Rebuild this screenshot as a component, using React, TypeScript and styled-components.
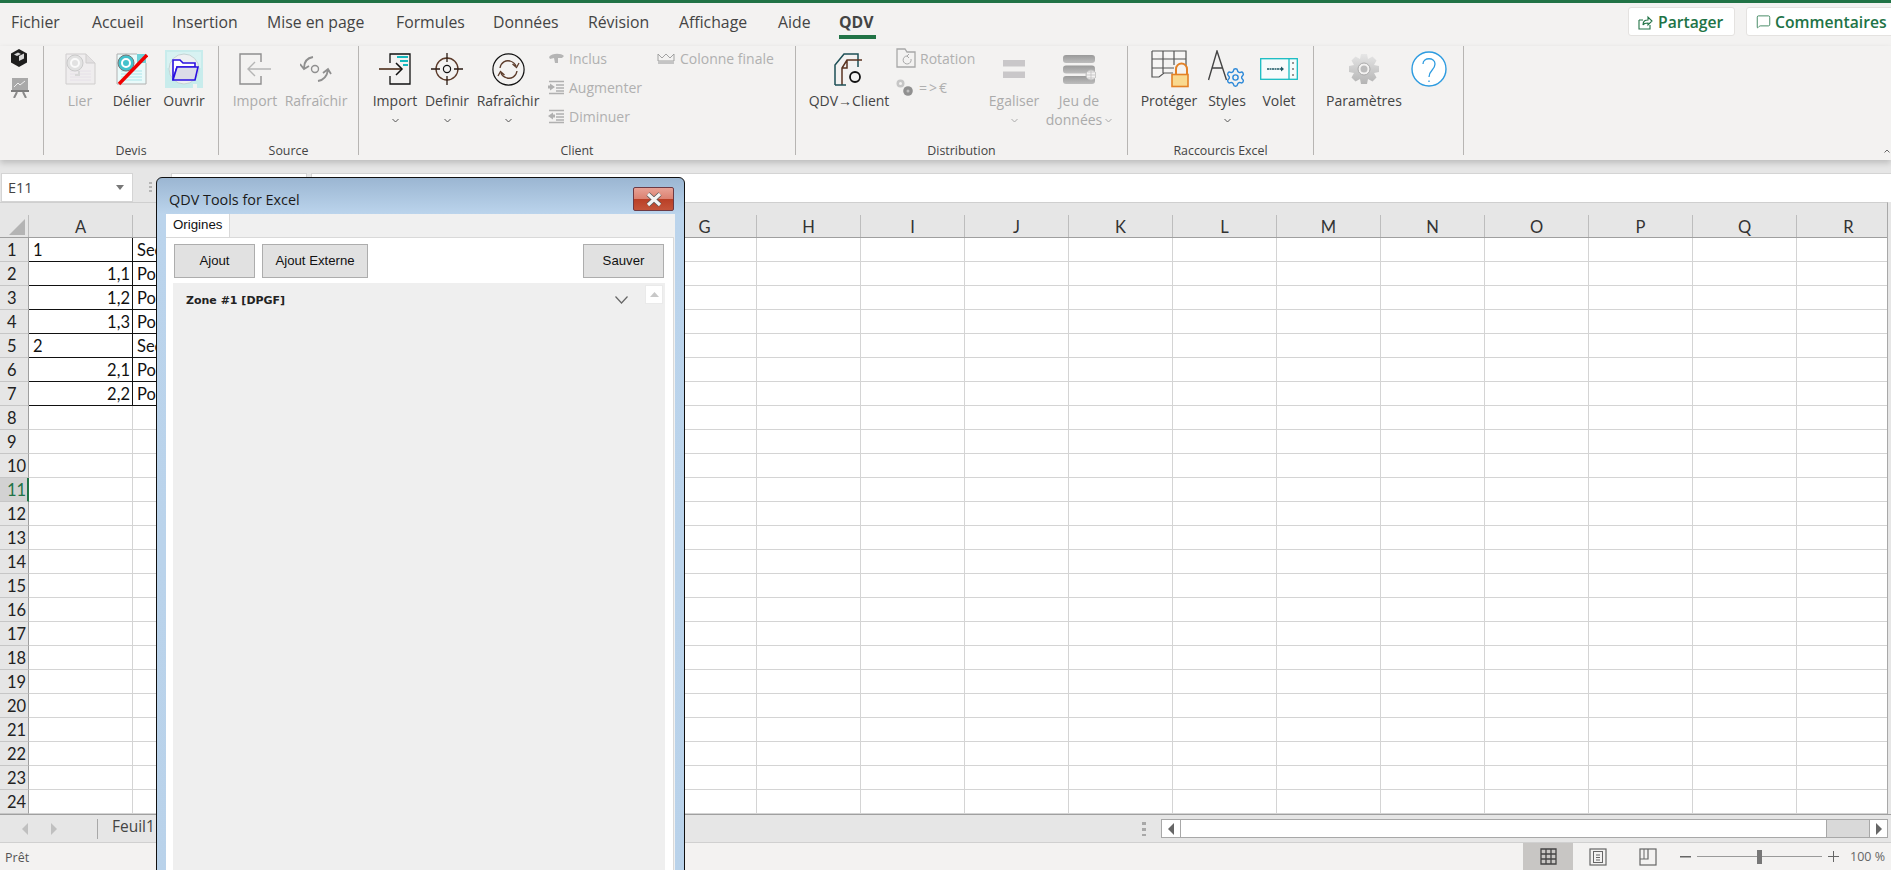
import React from "react";
import styled, { createGlobalStyle } from "styled-components";
import { Settings, MessageSquare } from "lucide-react";

const Global = createGlobalStyle`
  html, body { margin: 0; padding: 0; background: #fff; }
  #root { width: 1891px; height: 870px; }
  * { box-sizing: border-box; }
`;

const UI = `"Open Sans", "Noto Sans", sans-serif`;
const CELL = `Lato, "Liberation Sans", sans-serif`;
const WIN = `"Liberation Sans", Arial, sans-serif`;

const Page = styled.div`
  position: relative;
  width: 1891px;
  height: 870px;
  overflow: hidden;
  display: flex;
  flex-direction: column;
  background: #e6e6e6;
  font-family: ${UI};
`;
const TopLine = styled.div`height: 3px; background: #217346; flex: none;`;
const TabRow = styled.div`
  height: 43px;
  flex: none;
  background: #f3f2f1;
  display: flex;
  padding-left: 11px;
  align-items: flex-start;
`;
const Tab = styled.div<{ $w: number; $active?: boolean }>`
  width: ${(p) => p.$w}px;
  height: 36px;
  padding-top: 8px;
  font-size: 15.8px;
  line-height: 22px;
  color: #444;
  white-space: nowrap;
  font-weight: ${(p) => (p.$active ? 700 : 400)};
`;
const TabLabel = styled.div`
  width: 37px;
  height: 28px;
  border-bottom: 4px solid #217346;
`;
const ShareWrap = styled.div`
  margin-left: auto;
  margin-right: -5px;
  display: flex;
  gap: 11px;
  padding-top: 4px;
`;
const ShareBtn = styled.div<{ $w: number; $gap: number }>`
  width: ${(p) => p.$w}px;
  height: 29px;
  background: #fff;
  border: 1px solid #e4e2e0;
  border-radius: 3px;
  display: flex;
  align-items: center;
  gap: ${(p) => p.$gap}px;
  padding-left: 9px;
  font-size: 15.7px;
  font-weight: 600;
  color: #217346;
  white-space: nowrap;
`;
const Ribbon = styled.div`
  position: relative;
  height: 114px;
  flex: none;
  background: #f3f2f1;
  display: flex;
  box-shadow: 0 3px 6px rgba(0, 0, 0, 0.18);
  z-index: 1;
`;
const Group = styled.div<{ $w: number }>`
  width: ${(p) => p.$w}px;
  height: 109px;
  flex: none;
  display: flex;
  flex-direction: column;
  border-right: 1px solid #b7b5b3;
`;
const GroupBody = styled.div<{ $pad?: number }>`
  height: 97px;
  flex: none;
  display: flex;
  padding-left: ${(p) => p.$pad ?? 0}px;
`;
const GroupLabel = styled.div`
  height: 12px;
  line-height: 16px;
  text-align: center;
  font-size: 12.4px;
  color: #444;
  white-space: nowrap;
`;
const Big = styled.div<{ $w: number; $off?: boolean }>`
  width: ${(p) => p.$w}px;
  flex: none;
  display: flex;
  flex-direction: column;
  align-items: center;
  color: ${(p) => (p.$off ? "#ababab" : "#444")};
  font-size: 14px;
  white-space: nowrap;
`;
const IconSlot = styled.div`
  height: 42px;
  margin-top: 2px;
  display: flex;
  align-items: center;
  justify-content: center;
  flex: none;
`;
const BigText = styled.div`
  height: 20px;
  margin-top: 1px;
  line-height: 20px;
`;
const BigSub = styled.div`
  height: 18px;
  line-height: 18px;
  display: flex;
  align-items: center;
  gap: 3px;
`;
const SmallCol = styled.div<{ $w: number; $ml?: number }>`
  width: ${(p) => p.$w}px;
  margin-left: ${(p) => p.$ml ?? 0}px;
  display: flex;
  flex-direction: column;
  gap: 5px;
  flex: none;
`;
const SmallRow = styled.div<{ $slot: number }>`
  height: 24px;
  display: flex;
  align-items: center;
  font-size: 14px;
  color: #b0b0b0;
  white-space: nowrap;
  & > svg { flex: none; margin-right: ${(p) => p.$slot}px; }
`;
const EuroText = styled.span`
  letter-spacing: 2px;
`;
const TinyCol = styled.div`
  padding: 3px 0 0 11px;
  display: flex;
  flex-direction: column;
  gap: 11px;
`;
const Collapse = styled.svg`
  position: absolute;
  right: 1px;
  bottom: 7px;
`;
const FormulaBar = styled.div`
  height: 42px;
  flex: none;
  padding-top: 13px;
  display: flex;
  background: #e6e6e6;
`;
const NameBox = styled.div`
  width: 132px;
  height: 29px;
  margin-left: 1px;
  background: #fff;
  border: 1px solid #d4d4d4;
  display: flex;
  align-items: center;
  justify-content: space-between;
  padding: 0 8px 0 6px;
  font-size: 14.5px;
  color: #444;
`;
const Dots = styled.div`
  width: 3px;
  height: 11px;
  margin: 9px 19px 0 16px;
  flex: none;
  background: repeating-linear-gradient(#b4b4b4 0 2px, transparent 2px 4px);
`;
const FxBox = styled.div`
  width: 136px;
  height: 29px;
  margin-right: 4px;
  flex: none;
  background: #fff;
  border: 1px solid #d4d4d4;
`;
const FormulaInput = styled.div`
  flex: 1;
  height: 29px;
  background: #fff;
  border-top: 1px solid #d4d4d4;
  border-left: 1px solid #d4d4d4;
`;
const Sheet = styled.div`
  height: 612px;
  flex: none;
  width: 1888px;
  overflow: hidden;
  border-right: 1px solid #a8a8a8;
  background: #fff;
  border-top: 1px solid #cfcfcf;
  position: relative;
`;
const Canvas = styled.div`
  width: 1891px;
  background: #fff;
`;
const HeaderRow = styled.div`
  height: 35px;
  padding-top: 12px;
  display: flex;
  background: #e6e6e6;
  border-bottom: 1px solid #9f9f9f;
`;
const Corner = styled.div`
  width: 29px;
  flex: none;
  border-right: 1px solid #bdbdbd;
  display: flex;
  align-items: flex-end;
  justify-content: flex-end;
  padding: 0 3px 2px 0;
`;
const ColHead = styled.div`
  width: 104px;
  flex: none;
  border-right: 1px solid #bdbdbd;
  text-align: center;
  font-family: ${CELL};
  font-size: 16.5px;
  line-height: 24px;
  color: #333;
`;
const Row = styled.div`
  height: 24px;
  display: flex;
`;
const RowHead = styled.div<{ $sel?: boolean }>`
  width: 29px;
  flex: none;
  overflow: hidden;
  background: ${(p) => (p.$sel ? "#d2d2d2" : "#e6e6e6")};
  color: ${(p) => (p.$sel ? "#217346" : "#222")};
  border-right: ${(p) => (p.$sel ? "2px solid #217346" : "1px solid #9f9f9f")};
  border-bottom: 1px solid #c6c6c6;
  font-family: ${CELL};
  font-size: 16.5px;
  line-height: 25px;
  padding-left: 7px;
`;
const Cell = styled.div<{ $box?: boolean; $boxR?: boolean; $right?: boolean }>`
  width: 104px;
  flex: none;
  overflow: hidden;
  white-space: nowrap;
  font-family: ${CELL};
  font-size: 16.5px;
  line-height: 25px;
  color: #111;
  padding: 0 2px 0 4px;
  text-align: ${(p) => (p.$right ? "right" : "left")};
  border-right: 1px solid ${(p) => (p.$boxR ? "#111" : "#d4d4d4")};
  border-bottom: 1px solid ${(p) => (p.$box ? "#111" : "#d4d4d4")};
`;
const SheetTabs = styled.div`
  height: 29px;
  flex: none;
  display: flex;
  align-items: center;
  background: #e6e6e6;
  border-top: 1px solid #a0a0a0;
  border-bottom: 1px solid #d0d0d0;
`;
const NavArrows = styled.div`
  width: 98px;
  height: 20px;
  border-right: 1px solid #a8a8a8;
  padding-left: 22px;
  display: flex;
  align-items: center;
  gap: 23px;
  flex: none;
`;
const SheetName = styled.div`
  margin: -6px 0 0 14px;
  font-size: 15.5px;
  color: #444;
  white-space: nowrap;
  width: 90px;
`;
const Grip = styled.div`
  margin-left: 940px;
  width: 4px;
  height: 14px;
  background: repeating-linear-gradient(#a8a8a8 0 3px, transparent 3px 6px);
  flex: none;
`;
const HScroll = styled.div`
  margin-left: 15px;
  width: 727px;
  height: 19px;
  background: #d9d9d9;
  border: 1px solid #a8a8a8;
  display: flex;
  flex: none;
`;
const ScrollEnd = styled.div<{ $w: number }>`
  width: ${(p) => p.$w}px;
  flex: none;
  background: #fff;
  display: flex;
  align-items: center;
  justify-content: center;
  border-left: 1px solid #a8a8a8;
  &:first-child { border-left: none; border-right: 1px solid #a8a8a8; }
`;
const Thumb = styled.div`
  width: 646px;
  flex: none;
  background: #fff;
  border-right: 1px solid #a8a8a8;
`;
const Track = styled.div`flex: 1;`;
const StatusBar = styled.div`
  height: 27px;
  flex: none;
  display: flex;
  align-items: stretch;
  background: #f3f2f1;
  font-size: 12.5px;
  color: #555;
`;
const Ready = styled.div`
  width: 1523px;
  padding-left: 5px;
  line-height: 29px;
  flex: none;
`;
const ViewBtn = styled.div<{ $active?: boolean }>`
  width: 50px;
  display: flex;
  align-items: center;
  justify-content: center;
  background: ${(p) => (p.$active ? "#c8c6c4" : "transparent")};
  flex: none;
`;
const Zoom = styled.div`
  display: flex;
  align-items: center;
  padding-left: 7px;
  gap: 6px;
  flex: none;
`;
const ZoomSign = styled.div`
  width: 11px;
  height: 11px;
  flex: none;
  background: linear-gradient(#666, #666) center / 11px 1.5px no-repeat;
`;
const ZoomPlus = styled(ZoomSign)`
  background: linear-gradient(#666, #666) center / 11px 1px no-repeat,
    linear-gradient(#666, #666) center / 1px 11px no-repeat;
`;
const Slider = styled.div`
  width: 125px;
  height: 1px;
  background: #9a9a9a;
  display: flex;
  justify-content: center;
  align-items: center;
  flex: none;
`;
const SliderThumb = styled.div`
  width: 5px;
  height: 14px;
  background: #777;
  flex: none;
`;
const ZoomText = styled.div`
  margin-left: 5px;
  white-space: nowrap;
  color: #666;
`;
const Dialog = styled.div`
  position: absolute;
  left: 156px;
  top: 177px;
  width: 529px;
  height: 720px;
  z-index: 5;
  border: 1px solid #111;
  border-radius: 6px 6px 0 0;
  background: linear-gradient(#9bb6d2 0, #bbd4ec 36px, #b9d2ea 100%);
  display: flex;
  flex-direction: column;
`;
const TitleBar = styled.div`
  height: 36px;
  flex: none;
  display: flex;
  align-items: flex-start;
  justify-content: space-between;
  padding: 9px 10px 0 12px;
  font-size: 14.4px;
  color: #1a1a1a;
  line-height: 25px;
`;
const CloseBtn = styled.div`
  width: 41px;
  height: 24px;
  border: 1px solid #6d3a44;
  border-radius: 2px;
  background: linear-gradient(#e8a296 0, #dc8272 48%, #b93f26 50%, #c4543a 100%);
  display: flex;
  align-items: center;
  justify-content: center;
`;
const DialogClient = styled.div`
  flex: 1;
  margin: 0 9px;
  background: #f0f0f0;
  display: flex;
  flex-direction: column;
`;
const OriginTab = styled.div`
  width: 64px;
  height: 24px;
  flex: none;
  background: #fff;
  border-right: 1px solid #d9d9d9;
  padding-left: 7px;
  font-family: ${WIN};
  font-size: 13.3px;
  line-height: 22px;
  color: #111;
`;
const TabPage = styled.div`
  flex: 1;
  background: #fff;
  border: 1px solid #d9d9d9;
  border-width: 1px 1px 0 0;
  margin-top: -1px;
  padding: 6px 8px 0 7px;
  display: flex;
  flex-direction: column;
  margin-right: 1px;
`;
const Toolbar = styled.div`
  height: 34px;
  flex: none;
  display: flex;
  gap: 7px;
  padding: 0 1px;
`;
const ActionBtn = styled.div<{ $w: number; $push?: boolean }>`
  width: ${(p) => p.$w}px;
  height: 34px;
  padding-bottom: 2px;
  background: #e1e1e1;
  border: 1px solid #adadad;
  font-family: ${WIN};
  font-size: 13.2px;
  color: #111;
  display: flex;
  align-items: center;
  justify-content: center;
  ${(p) => p.$push && "margin-left: auto;"}
`;
const ZonePanel = styled.div`
  flex: 1;
  margin-top: 5px;
  background: #efefef;
  position: relative;
`;
const ZoneHead = styled.div`
  display: flex;
  align-items: center;
  justify-content: space-between;
  padding: 8px 37px 0 13px;
  height: 26px;
  font-family: "DejaVu Sans", sans-serif;
  font-size: 11px;
  font-weight: 700;
  color: #222;
`;
const ScrollUp = styled.div`
  position: absolute;
  right: 2px;
  top: 2px;
  width: 18px;
  height: 19px;
  background: #fff;
  border: 1px solid #eaeaea;
  display: flex;
  align-items: center;
  justify-content: center;
`;
const BlueGear = styled(Settings)`
  position: absolute;
  right: 0;
  bottom: 0;
  color: #2b88d8;
`;
const StylesWrap = styled.span`
  position: relative;
  display: block;
  width: 38px;
  height: 38px;
`;

const Chev = ({ c = "#555" }: { c?: string }) => (
  <svg width="7" height="5" viewBox="0 0 7 5"><path d="M0.5 1 L3.5 4 L6.5 1" fill="none" stroke={c} strokeWidth="1" /></svg>
);

const Cube = () => (
  <svg width="16" height="18" viewBox="0 0 16 18">
    <path d="M8 0 L16 4.5 V13.5 L8 18 L0 13.5 V4.5 Z" fill="#1e1e1e" />
    <path d="M8 7 L13 4.5 L13 9.5 L8 12 Z M3 5.5 L7 3.5 L10 5 L6 7 Z" fill="#d8d8d8" />
  </svg>
);
const Easel = () => (
  <svg width="18" height="20" viewBox="0 0 18 20">
    <rect x="1" y="0" width="16" height="12" fill="#a9a9a9" />
    <path d="M3 9 L7 5 L9 7 L14 3" stroke="#eee" fill="none" />
    <rect x="0" y="12" width="18" height="2" fill="#7d7d7d" />
    <path d="M6 14 L3 20 M12 14 L15 20" stroke="#8a8a8a" strokeWidth="2" />
  </svg>
);
const DocLier = () => (
  <svg width="31" height="32" viewBox="0 0 31 32">
    <path d="M1 1 H21 L30 10 V31 H1 Z" fill="#efedee" stroke="#cfcdcd" />
    <path d="M21 1 V10 H30" fill="#e2e0e1" stroke="#cfcdcd" />
    <path d="M5 18H26M5 21H26M5 24H26M5 27H26" stroke="#e6e0e8" />
    <circle cx="10" cy="10" r="8" fill="#e2e2e2" stroke="#cacaca" />
    <circle cx="10" cy="10" r="4" fill="none" stroke="#fafafa" strokeWidth="2" />
    <path d="M14 18 V22 H10" fill="none" stroke="#d8d8d8" strokeWidth="2" />
  </svg>
);
const DocDelier = () => (
  <svg width="32" height="33" viewBox="0 0 32 33">
    <path d="M1 1 H21 L30 10 V31 H1 Z" fill="#eafafa" stroke="#b0b0b0" />
    <path d="M21 1 H30 V10 H21 Z" fill="#6fd2d8" />
    <path d="M5 18H26M5 21H26M5 24H26M5 27H26" stroke="#a9e6ea" />
    <circle cx="10" cy="10" r="8" fill="#44c2cc" stroke="#777" />
    <circle cx="10" cy="10" r="4" fill="none" stroke="#fff" strokeWidth="2" />
    <path d="M3 31 L31 2" stroke="#f00000" strokeWidth="3.4" />
  </svg>
);
const DocOuvrir = () => (
  <svg width="38" height="38" viewBox="0 0 38 38">
    <path d="M0 0 H38 V38 H32 V34 H28 V38 H0 Z" fill="#c8ecec" />
    <path d="M2 2 H36 V18 H2 Z" fill="#d8f2f2" />
    <circle cx="19" cy="19" r="15" fill="#eef0f2" stroke="#c4d4d4" />
    <path d="M8 10 H15 L18 13 H30 V17 H12 L8 30 Z" fill="#fff" stroke="#2a10e0" strokeWidth="1.6" />
    <path d="M12 17 H33 L30 30 H8 Z" fill="#dcdde8" stroke="#2a10e0" strokeWidth="1.6" />
  </svg>
);
const ImportGray = () => (
  <svg width="33" height="32" viewBox="0 0 33 32">
    <path d="M22 9 V1 H1 V31 H22 V23" fill="none" stroke="#8f8f8f" strokeWidth="1.4" />
    <path d="M32 16 H9 M16 9 L9 16 L16 23" fill="none" stroke="#b5b5b5" strokeWidth="1.4" />
  </svg>
);
const RefreshGray = () => (
  <svg width="32" height="27" viewBox="0 0 32 27">
    <circle cx="15" cy="13" r="3.5" fill="none" stroke="#8f8f8f" strokeWidth="1.4" />
    <path d="M13 1 C7 2 4 6 4 12 M0 8 L4 13 L9 10" fill="none" stroke="#8f8f8f" strokeWidth="1.8" />
    <path d="M18 25 C24 24 27 20 28 14 M23 17 L28 13 L31 18" fill="none" stroke="#8f8f8f" strokeWidth="1.8" />
  </svg>
);
const ImportDark = () => (
  <svg width="32" height="32" viewBox="0 0 32 32">
    <path d="M11 10 V1 H31 V31 H11 V23" fill="none" stroke="#111" strokeWidth="1.3" />
    <path d="M0 16 H23" stroke="#4b2c1a" strokeWidth="1.6" />
    <path d="M17 10 L23 16 L17 22" fill="none" stroke="#111" strokeWidth="1.5" />
    <path d="M18 4 H29 M21 8 H29 M24 12 H29" stroke="#14b8bd" strokeWidth="1.8" />
  </svg>
);
const Target = () => (
  <svg width="32" height="32" viewBox="0 0 32 32">
    <circle cx="16" cy="16" r="11" fill="none" stroke="#5b3a29" strokeWidth="1.3" />
    <circle cx="16" cy="16" r="3.6" fill="none" stroke="#111" strokeWidth="1.2" />
    <path d="M16 0 V9 M16 23 V32 M0 16 H9 M23 16 H32" stroke="#2a1a12" strokeWidth="1.3" />
  </svg>
);
const RefreshCircle = () => (
  <svg width="33" height="33" viewBox="0 0 33 33">
    <circle cx="16.5" cy="16.5" r="15.6" fill="none" stroke="#111" strokeWidth="1.2" />
    <path d="M8 15 C9 9 14 7 18 8 C21 9 23 10 24 13 M20.5 11 L24.5 14.5 L27 10" fill="none" stroke="#5b3a29" strokeWidth="1.3" />
    <path d="M25 18 C24 24 19 26 15 25 C12 24 10 23 9 20 M12.5 22 L8.5 18.5 L6 23" fill="none" stroke="#5b3a29" strokeWidth="1.3" />
  </svg>
);
const QdvClient = () => (
  <svg width="30" height="33" viewBox="0 0 30 33">
    <path d="M1 32 V12 L10 1 H24 V14" fill="none" stroke="#1d4f56" strokeWidth="1.5" />
    <path d="M8 32 V15 L13 7 H28 M8 15 H13 V7" fill="none" stroke="#5b3320" strokeWidth="1.5" />
    <path d="M1 32 H12" stroke="#1d4f56" strokeWidth="1.5" />
    <circle cx="21" cy="24" r="5" fill="#f3f2f1" stroke="#111" strokeWidth="1.8" />
  </svg>
);
const Folder = () => (
  <svg width="20" height="21" viewBox="0 0 20 21">
    <path d="M1 19 V1 H9 L11 4 H19 V19 H1 Z" fill="none" stroke="#a8a8a8" strokeWidth="1.3" />
    <path d="M15 11 A4 4 0 1 1 11 8 M11 8 L13 6 M11 8 L13 10" fill="none" stroke="#a8a8a8" />
  </svg>
);
const Gears = () => (
  <svg width="17" height="17" viewBox="0 0 17 17">
    <circle cx="4.5" cy="4.5" r="4" fill="#c6c6c6" />
    <circle cx="4.5" cy="4.5" r="1.5" fill="#f3f2f1" />
    <circle cx="12" cy="12" r="4.8" fill="#909090" />
    <circle cx="12" cy="12" r="1.5" fill="#c0c0c0" />
  </svg>
);
const Equal = () => (
  <svg width="22" height="18" viewBox="0 0 22 18">
    <rect x="0" y="0" width="22" height="6.5" fill="#c9c7c9" />
    <rect x="0" y="11.5" width="22" height="6.5" fill="#c9c7c9" />
  </svg>
);
const Dataset = () => (
  <svg width="33" height="29" viewBox="0 0 33 29">
    <defs>
      <linearGradient id="ds" x1="0" y1="0" x2="0" y2="1">
        <stop offset="0" stopColor="#9a9a9a" />
        <stop offset="1" stopColor="#bdbdbd" />
      </linearGradient>
    </defs>
    <rect x="0" y="0" width="32" height="8" rx="3" fill="url(#ds)" />
    <rect x="0" y="10.5" width="32" height="8" rx="3" fill="url(#ds)" />
    <rect x="0" y="21" width="32" height="8" rx="3" fill="url(#ds)" />
    <circle cx="28" cy="20" r="5" fill="#f3f2f1" stroke="#bbb" />
    <path d="M23 20 H33 M28 15 V25 M25 17 H31 M25 23 H31" stroke="#bbb" strokeWidth="0.7" />
  </svg>
);
const LockGrid = () => (
  <svg width="40" height="38" viewBox="-2 0 40 38">
    <path d="M1 1 H35 V16 M1 1 V27 H8 L13 23 H22 M12 1 V23 M23 1 V15 M1 9 H35 M1 18 H23" fill="#f7f6f5" stroke="#555" strokeWidth="1.2" />
    <path d="M25 25 V19 A5.5 5.5 0 0 1 36 19 V25" fill="none" stroke="#e38126" strokeWidth="2" />
    <rect x="21" y="24.5" width="16" height="12" fill="#f9d98f" stroke="#e38126" strokeWidth="1.6" />
  </svg>
);
const VoletIcon = () => (
  <svg width="38" height="22" viewBox="0 0 38 22">
    <rect x="0.7" y="0.7" width="36.6" height="20.6" fill="#f7fbfb" stroke="#16bcc2" strokeWidth="1.3" />
    <path d="M29 1 V21" stroke="#16bcc2" strokeWidth="1.3" />
    <path d="M7 11 H23" stroke="#1e5a66" strokeWidth="1.4" strokeDasharray="2 0.5" />
    <path d="M21 8.5 L24 11 L21 13.5 Z" fill="#1e5a66" />
    <path d="M33 4 V6 M33 10 V12 M33 16 V18" stroke="#333" />
  </svg>
);
const StylesIcon = () => (
  <StylesWrap>
    <svg width="38" height="38" viewBox="0 0 38 38">
      <path d="M0.5 30 L9 1 L18.5 30 M4 18 H14.5" fill="none" stroke="#444" strokeWidth="1.4" />
    </svg>
    <BlueGear size={21} strokeWidth={1.6} />
  </StylesWrap>
);
const GearGray = () => (
  <svg width="30" height="30" viewBox="0 0 30 30">
    <defs>
      <linearGradient id="gg" x1="0" y1="0" x2="0" y2="1">
        <stop offset="0" stopColor="#e6e6e6" />
        <stop offset="1" stopColor="#b4b4b4" />
      </linearGradient>
    </defs>
    <path
      d="M12 0 H18 L19 5 L23.5 2.5 L27.5 6.5 L25 11 L30 12 V18 L25 19 L27.5 23.5 L23.5 27.5 L19 25 L18 30 H12 L11 25 L6.5 27.5 L2.5 23.5 L5 19 L0 18 V12 L5 11 L2.5 6.5 L6.5 2.5 L11 5 Z"
      fill="url(#gg)"
    />
    <circle cx="15" cy="15" r="6" fill="#f3f2f1" stroke="#aaa" />
    <circle cx="15" cy="15" r="3.5" fill="#bcbcbc" />
  </svg>
);
const Help = () => (
  <svg width="36" height="36" viewBox="0 0 36 36">
    <circle cx="18" cy="18" r="17" fill="#fff" stroke="#2d9be0" strokeWidth="1.4" />
    <path d="M12 13 C12 6 24 6 24 13 C24 19 18 19 18 26 M18 29.5 V31" fill="none" stroke="#2d9be0" strokeWidth="1.3" />
  </svg>
);
const IncluIcon = () => (
  <svg width="17" height="11" viewBox="0 0 17 11">
    <path d="M1 4 C4 0 13 0 16 3 L14 5 L10 5 L10 10 L7 10 L6 5 L2 6 Z" fill="#b5b5b5" />
  </svg>
);
const IndentIcon = ({ out }: { out?: boolean }) => (
  <svg width="17" height="15" viewBox="0 0 17 15">
    <path d="M1 1.5 H16 M8 5 H16 M8 8 H16 M8 11 H16 M1 13.5 H16" stroke="#b0b0b0" strokeWidth="1.6" />
    <path d={out ? "M0 7 L5 3.5 V5.5 H7 V8.5 H5 V10.5 Z" : "M7 7 L2 3.5 V5.5 H0 V8.5 H2 V10.5 Z"} fill="#b0b0b0" />
  </svg>
);
const Crown = () => (
  <svg width="18" height="11" viewBox="0 0 18 11">
    <path d="M1 1 L5 5 L9 1 L13 5 L17 1 V8 H1 Z" fill="#f3f2f1" stroke="#999" strokeWidth="0.9" />
    <rect x="1" y="8" width="16" height="3" fill="#c4c4c4" />
  </svg>
);
const ShareIcon = () => (
  <svg width="15" height="16" viewBox="0 0 15 16">
    <path d="M1 6 V15 H12 V11 M1 6 H5" fill="none" stroke="#217346" strokeWidth="1.1" />
    <path d="M5 11 C5 7 7 6 10 6 V3 L14 7 L10 11 V9 C8 9 6 9 5 11 Z" fill="none" stroke="#217346" strokeWidth="1.1" />
  </svg>
);
const CloseX = () => (
  <svg width="18" height="15" viewBox="0 0 18 15">
    <path d="M3 2 L15 13 M15 2 L3 13" stroke="#555" strokeWidth="4.6" />
    <path d="M3 2 L15 13 M15 2 L3 13" stroke="#f4f4f4" strokeWidth="3.2" />
  </svg>
);
const GridIco = () => (
  <svg width="17" height="17" viewBox="0 0 17 17">
    <path d="M1 1 H16 V16 H1 Z M1 6 H16 M1 11 H16 M6 1 V16 M11 1 V16" fill="none" stroke="#444" strokeWidth="1.3" />
  </svg>
);
const PageIco = () => (
  <svg width="18" height="18" viewBox="0 0 18 18">
    <rect x="1" y="1" width="16" height="16" fill="none" stroke="#666" strokeWidth="1.2" />
    <rect x="4.5" y="3.5" width="9" height="11" fill="none" stroke="#666" />
    <path d="M7 7 H11 M7 9.5 H11 M7 12 H11" stroke="#666" />
  </svg>
);
const BreakIco = () => (
  <svg width="18" height="18" viewBox="0 0 18 18">
    <rect x="1" y="1" width="16" height="16" fill="none" stroke="#666" strokeWidth="1.2" />
    <path d="M1 11 H9 V1 M9 1 V11" fill="none" stroke="#666" strokeWidth="1.2" />
    <path d="M5 1 V11" stroke="#666" />
  </svg>
);
const ArrowH = ({ left, c = "#c0c0c0" }: { left?: boolean; c?: string }) => (
  <svg width="6" height="12" viewBox="0 0 6 12"><path d={left ? "M6 0 V12 L0 6 Z" : "M0 0 V12 L6 6 Z"} fill={c} /></svg>
);

const tabs: [string, number][] = [
  ["Fichier", 81], ["Accueil", 80], ["Insertion", 95], ["Mise en page", 129], ["Formules", 97],
  ["Données", 95], ["Révision", 91], ["Affichage", 99], ["Aide", 61],
];
const cols = "ABCDEFGHIJKLMNOPQR".split("");
const boxed: Record<number, [string, string]> = {
  1: ["1", "Sec"], 2: ["1,1", "Po"], 3: ["1,2", "Po"], 4: ["1,3", "Po"],
  5: ["2", "Sec"], 6: ["2,1", "Po"], 7: ["2,2", "Po"],
};
const rows = Array.from({ length: 24 }, (_, i) => i + 1);

export default function App() {
  return (
    <Page>
      <Global />
      <TopLine />
      <TabRow>
        {tabs.map(([t, w]) => (
          <Tab key={t} $w={w}>{t}</Tab>
        ))}
        <Tab $w={45} $active><TabLabel>QDV</TabLabel></Tab>
        <ShareWrap>
          <ShareBtn $w={107} $gap={5}><ShareIcon />Partager</ShareBtn>
          <ShareBtn $w={150} $gap={4}><MessageSquare size={15} strokeWidth={1.3} />Commentaires</ShareBtn>
        </ShareWrap>
      </TabRow>
      <Ribbon>
        <Group $w={44}>
          <TinyCol><Cube /><Easel /></TinyCol>
        </Group>
        <Group $w={175}>
          <GroupBody $pad={10}>
            <Big $w={52} $off><IconSlot><DocLier /></IconSlot><BigText>Lier</BigText></Big>
            <Big $w={52}><IconSlot><DocDelier /></IconSlot><BigText>Délier</BigText></Big>
            <Big $w={52}><IconSlot><DocOuvrir /></IconSlot><BigText>Ouvrir</BigText></Big>
          </GroupBody>
          <GroupLabel>Devis</GroupLabel>
        </Group>
        <Group $w={140}>
          <GroupBody $pad={6}>
            <Big $w={60} $off><IconSlot><ImportGray /></IconSlot><BigText>Import</BigText></Big>
            <Big $w={62} $off><IconSlot><RefreshGray /></IconSlot><BigText>Rafraîchir</BigText></Big>
          </GroupBody>
          <GroupLabel>Source</GroupLabel>
        </Group>
        <Group $w={437}>
          <GroupBody $pad={10}>
            <Big $w={52}><IconSlot><ImportDark /></IconSlot><BigText>Import</BigText><BigSub><Chev /></BigSub></Big>
            <Big $w={52}><IconSlot><Target /></IconSlot><BigText>Definir</BigText><BigSub><Chev /></BigSub></Big>
            <Big $w={70}><IconSlot><RefreshCircle /></IconSlot><BigText>Rafraîchir</BigText><BigSub><Chev /></BigSub></Big>
            <SmallCol $w={109} $ml={5}>
              <SmallRow $slot={4}><IncluIcon />Inclus</SmallRow>
              <SmallRow $slot={4}><IndentIcon />Augmenter</SmallRow>
              <SmallRow $slot={4}><IndentIcon out />Diminuer</SmallRow>
            </SmallCol>
            <SmallCol $w={130}>
              <SmallRow $slot={5}><Crown />Colonne finale</SmallRow>
            </SmallCol>
          </GroupBody>
          <GroupLabel>Client</GroupLabel>
        </Group>
        <Group $w={332}>
          <GroupBody $pad={10}>
            <Big $w={86}><IconSlot><QdvClient /></IconSlot><BigText>QDV→Client</BigText></Big>
            <SmallCol $w={85} $ml={4}>
              <SmallRow $slot={4}><Folder />Rotation</SmallRow>
              <SmallRow $slot={6}><Gears /><EuroText>=&gt;€</EuroText></SmallRow>
            </SmallCol>
            <Big $w={66} $off><IconSlot><Equal /></IconSlot><BigText>Egaliser</BigText><BigSub><Chev c="#aaa" /></BigSub></Big>
            <Big $w={64} $off><IconSlot><Dataset /></IconSlot><BigText>Jeu de</BigText><BigSub>données <Chev c="#aaa" /></BigSub></Big>
          </GroupBody>
          <GroupLabel>Distribution</GroupLabel>
        </Group>
        <Group $w={186}>
          <GroupBody $pad={10}>
            <Big $w={62}><IconSlot><LockGrid /></IconSlot><BigText>Protéger</BigText></Big>
            <Big $w={54}><IconSlot><StylesIcon /></IconSlot><BigText>Styles</BigText><BigSub><Chev /></BigSub></Big>
            <Big $w={50}><IconSlot><VoletIcon /></IconSlot><BigText>Volet</BigText></Big>
          </GroupBody>
          <GroupLabel>Raccourcis Excel</GroupLabel>
        </Group>
        <Group $w={150}>
          <GroupBody $pad={8}>
            <Big $w={84}><IconSlot><GearGray /></IconSlot><BigText>Paramètres</BigText></Big>
            <Big $w={46}><IconSlot><Help /></IconSlot></Big>
          </GroupBody>
        </Group>
        <Collapse width="6" height="4" viewBox="0 0 6 4"><path d="M0.5 3.5 L3 1 L5.5 3.5" fill="none" stroke="#666" /></Collapse>
      </Ribbon>
      <FormulaBar>
        <NameBox>E11<svg width="8" height="5" viewBox="0 0 8 5"><path d="M0 0 H8 L4 5 Z" fill="#777" /></svg></NameBox>
        <Dots />
        <FxBox />
        <FormulaInput />
      </FormulaBar>
      <Sheet>
        <Canvas>
          <HeaderRow>
            <Corner>
              <svg width="16" height="16" viewBox="0 0 16 16"><path d="M16 0 V16 H0 Z" fill="#b4b4b4" /></svg>
            </Corner>
            {cols.map((c) => <ColHead key={c}>{c}</ColHead>)}
          </HeaderRow>
          {rows.map((r) => {
            const b = boxed[r];
            return (
              <Row key={r}>
                <RowHead $sel={r === 11}>{r}</RowHead>
                {cols.map((c, i) => {
                  if (b && i === 0) {
                    return <Cell key={c} $box $boxR $right={b[0].includes(",")}>{b[0]}</Cell>;
                  }
                  if (b && i === 1) {
                    return <Cell key={c} $box $boxR>{b[1]}</Cell>;
                  }
                  return <Cell key={c} />;
                })}
              </Row>
            );
          })}
        </Canvas>
      </Sheet>
      <SheetTabs>
        <NavArrows><ArrowH left /><ArrowH /></NavArrows>
        <SheetName>Feuil1</SheetName>
        <Grip />
        <HScroll>
          <ScrollEnd $w={19}><ArrowH left c="#666" /></ScrollEnd>
          <Thumb />
          <Track />
          <ScrollEnd $w={18}><ArrowH c="#666" /></ScrollEnd>
        </HScroll>
      </SheetTabs>
      <StatusBar>
        <Ready>Prêt</Ready>
        <ViewBtn $active><GridIco /></ViewBtn>
        <ViewBtn><PageIco /></ViewBtn>
        <ViewBtn><BreakIco /></ViewBtn>
        <Zoom>
          <ZoomSign />
          <Slider><SliderThumb /></Slider>
          <ZoomPlus />
          <ZoomText>100 %</ZoomText>
        </Zoom>
      </StatusBar>
      <Dialog>
        <TitleBar>
          QDV Tools for Excel
          <CloseBtn><CloseX /></CloseBtn>
        </TitleBar>
        <DialogClient>
          <OriginTab>Origines</OriginTab>
          <TabPage>
            <Toolbar>
              <ActionBtn $w={81}>Ajout</ActionBtn>
              <ActionBtn $w={106}>Ajout Externe</ActionBtn>
              <ActionBtn $w={81} $push>Sauver</ActionBtn>
            </Toolbar>
            <ZonePanel>
              <ZoneHead>
                Zone #1 [DPGF]
                <svg width="13" height="8" viewBox="0 0 13 8"><path d="M0.5 0.5 L6.5 7 L12.5 0.5" fill="none" stroke="#666" strokeWidth="1.2" /></svg>
              </ZoneHead>
              <ScrollUp><svg width="9" height="5" viewBox="0 0 9 5"><path d="M0 5 L4.5 0 L9 5 Z" fill="#c8c8c8" /></svg></ScrollUp>
            </ZonePanel>
          </TabPage>
        </DialogClient>
      </Dialog>
    </Page>
  );
}
